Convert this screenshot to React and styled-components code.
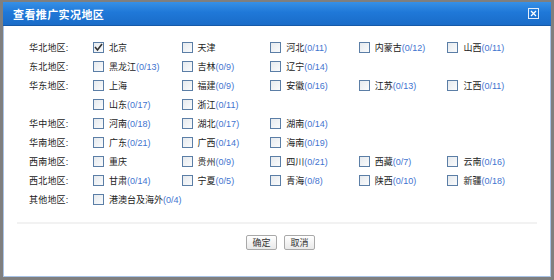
import React from "react";
import styled, { createGlobalStyle } from "styled-components";

const GlobalStyle = createGlobalStyle`
  html, body {
    margin: 0;
    padding: 0;
    background: #7f7f7f;
    font-family: "Liberation Sans", "Noto Sans CJK SC", sans-serif;
  }
`;

const regions = [
  { name: "华北地区", items: [["北京", null, true], ["天津"], ["河北", "0/11"], ["内蒙古", "0/12"], ["山西", "0/11"]] },
  { name: "东北地区", items: [["黑龙江", "0/13"], ["吉林", "0/9"], ["辽宁", "0/14"]] },
  {
    name: "华东地区",
    items: [["上海"], ["福建", "0/9"], ["安徽", "0/16"], ["江苏", "0/13"], ["江西", "0/11"], ["山东", "0/17"], ["浙江", "0/11"]]
  },
  { name: "华中地区", items: [["河南", "0/18"], ["湖北", "0/17"], ["湖南", "0/14"]] },
  { name: "华南地区", items: [["广东", "0/21"], ["广西", "0/14"], ["海南", "0/19"]] },
  { name: "西南地区", items: [["重庆"], ["贵州", "0/9"], ["四川", "0/21"], ["西藏", "0/7"], ["云南", "0/16"]] },
  { name: "西北地区", items: [["甘肃", "0/14"], ["宁夏", "0/5"], ["青海", "0/8"], ["陕西", "0/10"], ["新疆", "0/18"]] },
  { name: "其他地区", items: [["港澳台及海外", "0/4"]] }
];

const Dialog = styled.div`
  margin: 2px 3px 0 3px;
  height: 275px;
  background: #fff;
  border: 1px solid #a9c3e6;
  border-top: none;
  box-sizing: border-box;
  display: flex;
  flex-direction: column;
`;

const Header = styled.div`
  height: 23px;
  display: flex;
  align-items: center;
  justify-content: space-between;
  padding: 0 10px 0 10px;
  background: linear-gradient(180deg, #3790e6 0%, #1f78d8 45%, #1a6cc8 100%);
  border-bottom: 1px solid #1559a8;
  margin: 0 -1px;
`;

const Title = styled.span`
  color: #fff;
  font-size: 11px;
  font-weight: bold;
  letter-spacing: 0.4px;
`;

const Close = styled.span`
  width: 9px;
  height: 9px;
  border: 1px solid #e4eefa;
  display: flex;
  align-items: center;
  justify-content: center;
  margin-right: 2px;
`;

const Body = styled.div`
  padding: 12px 0 0 25px;
`;

const Row = styled.div`
  display: grid;
  grid-template-columns: 64px 1fr;
`;

const Label = styled.div`
  display: flex;
  align-items: center;
  font-size: 9px;
  color: #222;
  height: 19px;
  letter-spacing: 0.2px;
`;

const Items = styled.div`
  display: grid;
  grid-template-columns: repeat(5, 88.6px);
`;

const Item = styled.label`
  display: flex;
  align-items: center;
  gap: 5px;
  height: 19px;
  font-size: 9px;
  color: #222;
  white-space: nowrap;
`;

const Box = styled.span`
  width: 9px;
  height: 9px;
  border: 1px solid #5b7ea6;
  background: linear-gradient(135deg, #e6eaee 0%, #fafbfc 100%);
  display: flex;
  align-items: center;
  justify-content: center;
  flex-shrink: 0;
`;

const Count = styled.span`
  color: #3f74cf;
`;

const Divider = styled.div`
  margin: 13px 13px 0 13px;
  height: 2px;
  background: #f2f2f2;
`;

const Footer = styled.div`
  display: flex;
  justify-content: center;
  gap: 7px;
  padding-top: 11px;
  padding-left: 7px;
`;

const Button = styled.button`
  width: 31px;
  height: 15px;
  padding: 0;
  font-family: inherit;
  font-size: 9px;
  color: #333;
  border: 1px solid #a9a9a9;
  border-radius: 2px;
  background: linear-gradient(180deg, #ffffff 0%, #e9e9e9 100%);
`;

const Check = () => (
  <svg width="9" height="9" viewBox="0 0 9 9">
    <path d="M1 4 L3.5 7 L8 1" fill="none" stroke="#333" strokeWidth="1.6" />
  </svg>
);

export default function App() {
  return (
    <>
      <GlobalStyle />
      <Dialog>
        <Header>
          <Title>查看推广实况地区</Title>
          <Close>
            <svg width="7" height="7" viewBox="0 0 7 7">
              <path d="M1 1 L6 6 M6 1 L1 6" stroke="#fff" strokeWidth="1.3" />
            </svg>
          </Close>
        </Header>
        <Body>
          {regions.map((r) => (
            <Row key={r.name}>
              <Label>{r.name}:</Label>
              <Items>
                {r.items.map(([city, count, checked]) => (
                  <Item key={city}>
                    <Box>{checked && <Check />}</Box>
                    <span>
                      {city}
                      {count && <Count>({count})</Count>}
                    </span>
                  </Item>
                ))}
              </Items>
            </Row>
          ))}
        </Body>
        <Divider />
        <Footer>
          <Button>确定</Button>
          <Button>取消</Button>
        </Footer>
      </Dialog>
    </>
  );
}
